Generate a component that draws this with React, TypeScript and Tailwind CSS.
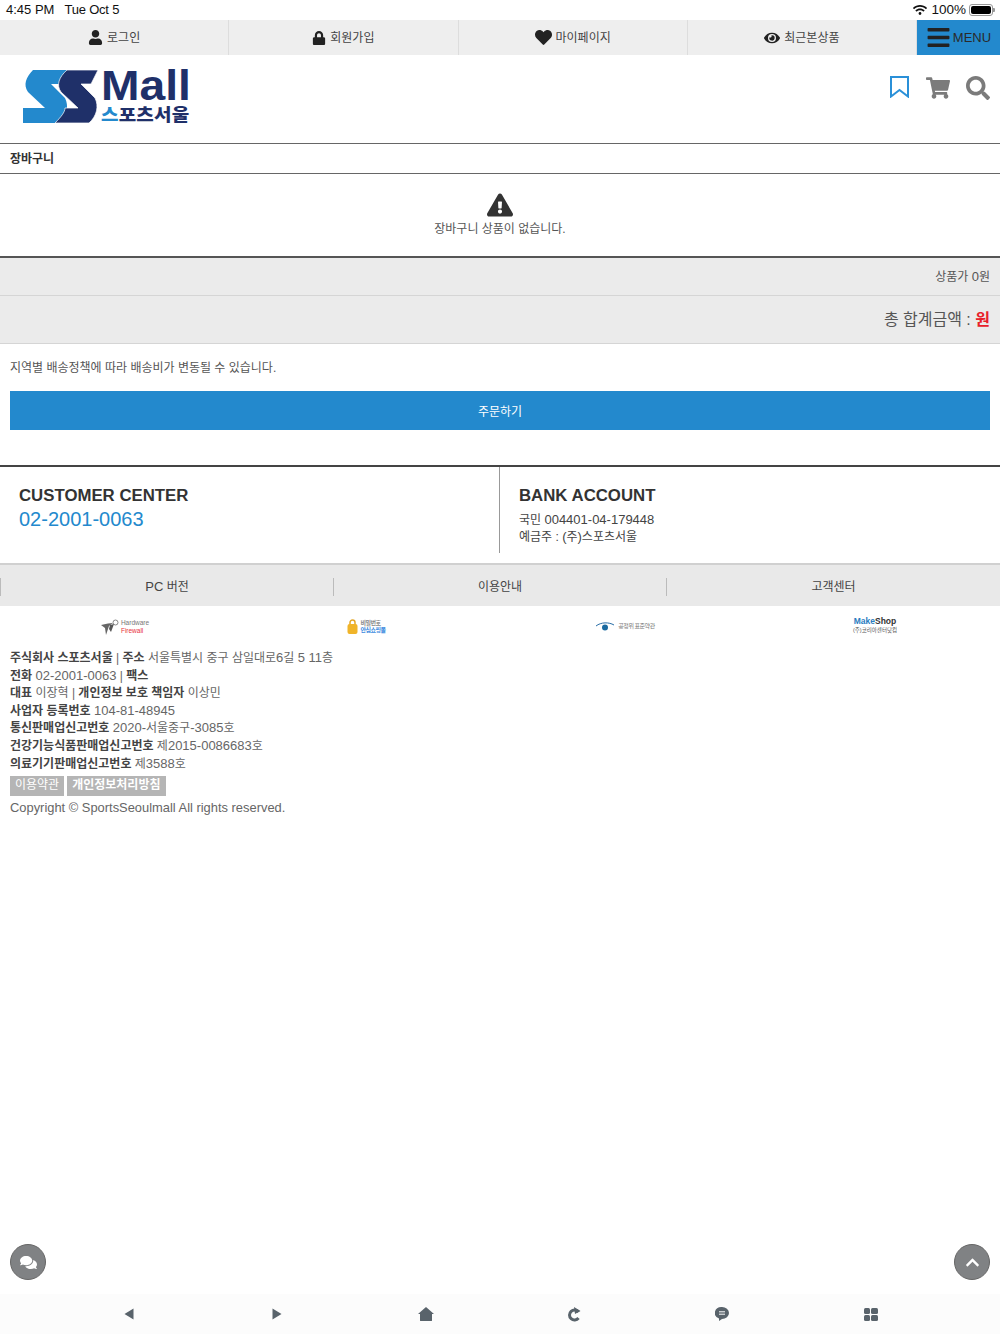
import React from "react";
import {
  FaUser,
  FaLock,
  FaHeart,
  FaEye,
  FaBars,
  FaShoppingCart,
  FaSearch,
  FaExclamationTriangle,
  FaComments,
  FaChevronUp,
  FaWifi,
} from "react-icons/fa";

const font = "font-['Liberation_Sans','Noto_Sans_CJK_KR',sans-serif]";

// latin runs are a touch bigger than the korean around them
const N = ({ children }: { children: React.ReactNode }) => <span className="text-[13px] leading-none">{children}</span>;

const B = ({ children }: { children: React.ReactNode }) => <b className="text-[#444]">{children}</b>;

const Logo = () => (
  <div className="flex items-start">
    <svg width="78" height="54" viewBox="0 0 78 54">
      <path d="M10 0H48L38 14H28L42 28C46 36 44 46 38 53H0V38H22L5 22C0 15 3 7 10 0Z" fill="#2389cd" />
      <path d="M44 0H75L68 14H58L72 28C76 36 74 46 66 53H32C38 47 42 42 42 38H55L38 22C33 15 36 7 44 0Z" fill="#1f3069" stroke="#fff" strokeWidth="0.7" />
    </svg>
    <div className="flex flex-col items-start">
      <span className="text-[42px] leading-[31px] font-bold text-[#1f3069] h-[36px] scale-x-[1.1] origin-left">Mall</span>
      <span className="text-[19px] leading-[19px] font-black text-[#1f3069] h-[18px] scale-y-[0.88] tracking-[0.2px]">
        <span className="text-[#2389cd]">스</span>포츠서울
      </span>
    </div>
  </div>
);

const NavItem = ({ icon, label }: { icon: React.ReactNode; label: string }) => (
  <div className="flex-1 flex items-center justify-center gap-[4px] border-r border-[#dddddd] text-[12px] text-[#444]">
    {icon}
    <span>{label}</span>
  </div>
);

const Round = ({ className, children }: { className: string; children: React.ReactNode }) => (
  <div className={`absolute top-[1244px] w-[36px] h-[36px] rounded-full bg-[#808284] border border-[#666] flex items-center justify-center text-white ${className}`}>
    {children}
  </div>
);

const App = () => {
  return (
    <div className={`${font} relative flex flex-col h-[1334px] w-[1000px] bg-white overflow-hidden`}>
      {/* status bar */}
      <div className="h-[20px] flex items-center justify-between pl-[6px] pr-[5px] text-[13px] text-[#111]">
        <div className="flex gap-[10px]">
          <span>4:45 PM</span>
          <span className="tracking-[-0.2px]">Tue Oct 5</span>
        </div>
        <div className="flex items-center">
          <FaWifi className="text-[14px] mr-[4px]" />
          <span className="text-[13.5px] mr-[3px]">100%</span>
          <div className="w-[24px] h-[12px] border border-[#999] rounded-[3px] p-[1px]">
            <div className="w-full h-full bg-black rounded-[2px]" />
          </div>
          <div className="w-[2px] h-[4px] bg-[#999] rounded-r-[1px]" />
        </div>
      </div>

      {/* top nav */}
      <div className="h-[35px] flex bg-[#eeeeee]">
        <div className="flex flex-1">
          <NavItem icon={<FaUser className="text-[15px] text-[#222]" />} label="로그인" />
          <NavItem icon={<FaLock className="text-[14px] text-[#222]" />} label="회원가입" />
          <NavItem icon={<FaHeart className="text-[17px] text-[#222]" />} label="마이페이지" />
          <NavItem icon={<FaEye className="text-[16px] text-[#222]" />} label="최근본상품" />
        </div>
        <div className="w-[83px] bg-[#2389cd] flex items-center justify-center gap-[2px] text-[13px] text-[#2a2a2a]">
          <FaBars className="text-[25px] text-[#222]" />
          <span>MENU</span>
        </div>
      </div>

      {/* header */}
      <div className="h-[88px] flex justify-between pl-[23px] pr-[10px] pt-[15px]">
        <Logo />
        <div className="flex items-start gap-[14px] pt-[6px]">
          <svg width="19" height="22" viewBox="0 0 19 22" fill="none" stroke="#2a90d8" strokeWidth="2" className="mr-[3px]">
            <path d="M1 1H18V20.5L9.5 14L1 20.5Z" />
          </svg>
          <FaShoppingCart className="text-[24px] text-[#7b7b7b]" />
          <FaSearch className="text-[24px] text-[#7b7b7b] ml-[2px]" />
        </div>
      </div>

      {/* title */}
      <div className="h-[31px] border-y border-[#666] flex items-center pl-[10px] text-[12px] font-bold text-[#333]">장바구니</div>

      {/* empty state */}
      <div className="h-[82px] flex flex-col items-center pt-[18px] text-[12px] leading-[18px] text-[#555]">
        <FaExclamationTriangle className="text-[26px] text-[#333]" />
        <span className="mt-[2px]">장바구니 상품이 없습니다.</span>
      </div>

      {/* totals */}
      <div className="border-t-2 border-[#555] bg-[#ebebeb]">
        <div className="h-[38px] flex items-center justify-end pr-[10px] text-[12px] text-[#555] border-b border-[#d5d5d5]">
          <span>상품가 <N>0</N>원</span>
        </div>
        <div className="h-[48px] flex items-center justify-end pr-[10px] text-[16px] text-[#555] border-b border-[#d5d5d5]">
          <span>총 합계금액 :&nbsp;</span>
          <span className="font-bold text-[#e8202a]">원</span>
        </div>
      </div>

      {/* order */}
      <div className="px-[10px] pt-[15px]">
        <p className="text-[12px] leading-[18px] text-[#555]">지역별 배송정책에 따라 배송비가 변동될 수 있습니다.</p>
        <div className="mt-[14px] h-[39px] pt-[2px] bg-[#2389cd] flex items-center justify-center text-[12px] text-white">주문하기</div>
      </div>

      {/* customer center */}
      <div className="mt-[35px] h-[100px] border-t-2 border-t-[#444] border-b-2 border-b-[#d0d0d0] flex">
        <div className="w-[500px] h-[86px] border-r border-[#999] pl-[19px] pt-[19px]">
          <div className="text-[16.8px] leading-[20px] font-bold text-[#333]">CUSTOMER CENTER</div>
          <div className="text-[20px] leading-[26px] text-[#2389cd]">02-2001-0063</div>
        </div>
        <div className="flex-1 pl-[19px] pt-[19px]">
          <div className="text-[16.8px] leading-[20px] font-bold text-[#333]">BANK ACCOUNT</div>
          <div className="text-[12px] leading-[17px] text-[#444] mt-[6px]">
            <div>국민 <N>004401-04-179448</N></div>
            <div>예금주 : <N>(</N>주<N>)</N>스포츠서울</div>
          </div>
        </div>
      </div>

      {/* footer links */}
      <div className="h-[41px] pt-[2px] bg-[#e9e9e9] flex items-center text-[12px] text-[#444]">
        <div className="w-[334px] h-[18px] flex items-center justify-center border-x border-[#bbbbbb]"><span><N>PC</N> 버전</span></div>
        <div className="w-[333px] h-[18px] flex items-center justify-center border-r border-[#bbbbbb]">이용안내</div>
        <div className="flex-1 h-[18px] flex items-center justify-center">고객센터</div>
      </div>

      {/* trust marks */}
      <div className="h-[40px] pt-[1px] grid grid-cols-4 items-center">
        <div className="flex items-center justify-center gap-[2px]">
          <svg width="18" height="16" viewBox="0 0 18 16">
            <circle cx="14.5" cy="3.5" r="2.5" fill="none" stroke="#888" strokeWidth="1" />
            <path d="M0 6L7 4.5L12 4L8 7L5 16L4 9Z" fill="#666" />
            <path d="M9 6L13 5L10 13L8 10Z" fill="#555" />
          </svg>
          <div className="text-[6.5px] leading-[7.5px]">
            <div className="text-[#777]">Hardware</div>
            <div className="text-[#e8303a]">Firewall</div>
          </div>
        </div>
        <div className="flex items-center justify-center gap-[2px] pr-[17px]">
          <svg width="11" height="15" viewBox="0 0 11 15">
            <path d="M3 6V3.5a2.5 2.5 0 0 1 5 0V6" fill="none" stroke="#e3a72a" strokeWidth="1.5" />
            <rect x="0.5" y="5" width="10" height="10" rx="2" fill="#f0b429" />
          </svg>
          <div className="text-[6px] leading-[7px] font-bold tracking-[-0.5px]">
            <div className="text-[#888]">비밀번호</div>
            <div className="text-[#3b8be0]">안심쇼핑몰</div>
          </div>
        </div>
        <div className="flex items-center justify-center gap-[3px]">
          <svg width="20" height="9" viewBox="0 0 20 9">
            <path d="M1 4C6 0 14 0 19 3" fill="none" stroke="#2a6fa8" strokeWidth="1" />
            <circle cx="10" cy="5.5" r="3" fill="#1a6aa0" />
          </svg>
          <span className="text-[6px] text-[#777] tracking-[-0.5px]">공정위 표준약관</span>
        </div>
        <div className="flex flex-col items-center pb-[2px]">
          <span className="text-[8.5px] leading-[9px] font-bold text-[#2a7cc0]">Make<span className="text-[#333]">Shop</span></span>
          <span className="text-[5.5px] leading-[8px] text-[#555]">(주)코리아센터닷컴</span>
        </div>
      </div>

      {/* company info */}
      <div className="px-[10px] pt-[4px] text-[12px] leading-[17.6px] text-[#666]">
        <div><B>주식회사 스포츠서울</B> | <B>주소</B> 서울특별시 중구 삼일대로<N>6</N>길 <N>5 11</N>층</div>
        <div><B>전화</B> <N>02-2001-0063</N> | <B>팩스</B></div>
        <div><B>대표</B> 이장혁 | <B>개인정보 보호 책임자</B> 이상민</div>
        <div><B>사업자 등록번호</B> <N>104-81-48945</N></div>
        <div><B>통신판매업신고번호</B> <N>2020-</N>서울중구<N>-3085</N>호</div>
        <div><B>건강기능식품판매업신고번호</B> 제<N>2015-0086683</N>호</div>
        <div><B>의료기기판매업신고번호</B> 제<N>3588</N>호</div>
        <div className="flex gap-[3px] mt-[3px] text-white">
          <span className="h-[20px] px-[5px] bg-[#b5b5b5] flex items-center">이용약관</span>
          <span className="h-[20px] px-[5px] bg-[#b5b5b5] flex items-center font-bold">개인정보처리방침</span>
        </div>
        <div className="mt-[3px] text-[12.9px]">Copyright © SportsSeoulmall All rights reserved.</div>
      </div>

      {/* browser toolbar */}
      <div className="mt-auto h-[40px] bg-[#fcfcfc] grid grid-cols-6 px-[55px] items-center">
        <div className="flex justify-center">
          <svg width="10" height="12" viewBox="0 0 10 12" fill="#59636b"><path d="M0.5 6L9.5 0.5V11.5Z" /></svg>
        </div>
        <div className="flex justify-center">
          <svg width="10" height="12" viewBox="0 0 10 12" fill="#59636b"><path d="M9.5 6L0.5 0.5V11.5Z" /></svg>
        </div>
        <div className="flex justify-center">
          <svg width="16" height="14" viewBox="0 0 16 14" fill="#59636b"><path d="M8 0L16 7H14V13.5Q14 14 13 14H3Q2 14 2 13.5V7H0Z" /></svg>
        </div>
        <div className="flex justify-center">
          <svg width="14" height="15" viewBox="0 0 14 15" fill="none">
            <path d="M11.5 5A5 5 0 1 0 11.5 11" stroke="#59636b" strokeWidth="3" />
            <path d="M7 0L13.5 4L8 7Z" fill="#59636b" />
          </svg>
        </div>
        <div className="flex justify-center">
          <svg width="14" height="14" viewBox="0 0 14 14">
            <path d="M7 0A7 6 0 0 1 7 12L4 14L4 11.5A7 6 0 0 1 7 0Z" fill="#59636b" />
            <path d="M4 4.8H10M4 7.2H10" stroke="#fcfcfc" strokeWidth="1" />
          </svg>
        </div>
        <div className="grid grid-cols-2 gap-[1px] w-[14px] mx-auto">
          <div className="h-[6px] rounded-[1.5px] bg-[#59636b]" />
          <div className="h-[6px] rounded-[1.5px] bg-[#59636b]" />
          <div className="h-[6px] rounded-[1.5px] bg-[#59636b]" />
          <div className="h-[6px] rounded-[1.5px] bg-[#59636b]" />
        </div>
      </div>

      {/* floating buttons */}
      <Round className="left-[10px]"><FaComments className="text-[17px]" /></Round>
      <Round className="left-[954px]"><FaChevronUp className="text-[15px]" /></Round>
    </div>
  );
};

export default App;
